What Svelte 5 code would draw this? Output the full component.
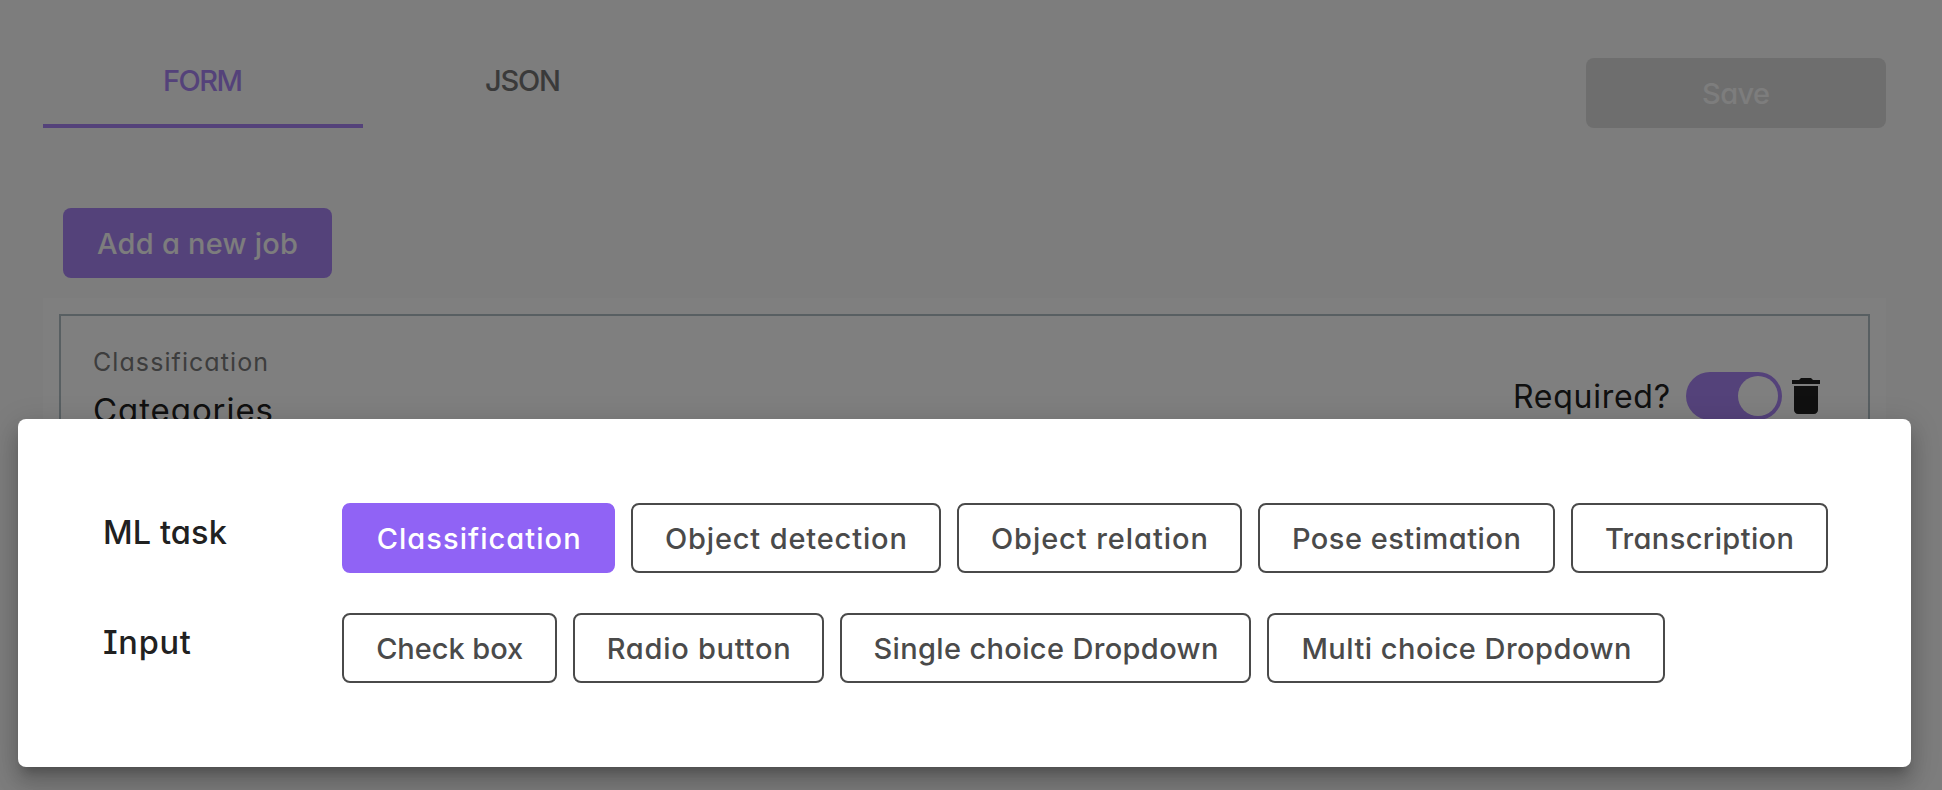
<script>
  const tasks = [
    { label: 'Classification', box: 272.5, text: 204, active: true },
    { label: 'Object detection', box: 310, text: 242 },
    { label: 'Object relation', box: 285, text: 217 },
    { label: 'Pose estimation', box: 297, text: 229 },
    { label: 'Transcription', box: 257, text: 189 },
  ];
  const inputs = [
    { label: 'Check box', box: 214.5, text: 147 },
    { label: 'Radio button', box: 251.5, text: 184 },
    { label: 'Single choice Dropdown', box: 411, text: 345 },
    { label: 'Multi choice Dropdown', box: 398, text: 330 },
  ];
  const rows = [
    { name: 'ML task', width: 124, items: tasks },
    { name: 'Input', width: 88, items: inputs },
  ];

  // Spreads the letters of a label over the given width.
  function track(node, width) {
    const count = node.textContent.length - 1;
    const gap = (width - node.getBoundingClientRect().width) / count;
    node.style.letterSpacing = `${gap}px`;
    node.style.marginRight = `${-gap}px`;
  }
</script>

<div class="screen">
  <div class="page">
    <header>
      <nav>
        <div class="tab selected"><span use:track={80}>FORM</span></div>
        <div class="tab"><span use:track={76}>JSON</span></div>
      </nav>
      <button class="save"><span use:track={68}>Save</span></button>
    </header>
    <button class="add"><span use:track={201}>Add a new job</span></button>
    <section class="panel">
      <div class="card">
        <div class="titles">
          <div class="kind"><span use:track={175}>Classification</span></div>
          <div class="name"><span use:track={180}>Categories</span></div>
        </div>
        <div class="controls">
          <span class="required"><span use:track={157}>Required?</span></span>
          <div class="switch"><div class="knob"></div></div>
          <svg viewBox="0 0 24 24" width="48" height="48"><path fill="#212121" d="M6 19c0 1.1.9 2 2 2h8c1.1 0 2-.9 2-2V7H6v12zM19 4h-3.5l-1-1h-5l-1 1H5v2h14V4z" /></svg>
        </div>
      </div>
    </section>
  </div>
  <div class="backdrop"></div>
  <div class="dialog">
    {#each rows as row}
      <div class="row">
        <div class="label"><span use:track={row.width}>{row.name}</span></div>
        <div class="options">
          {#each row.items as item}
            <button class="option" class:active={item.active} style="width: {item.box}px">
              <span use:track={item.text}>{item.label}</span>
            </button>
          {/each}
        </div>
      </div>
    {/each}
  </div>
</div>

<style>
  :global(body) { margin: 0; }
  .screen {
    position: relative;
    width: 1942px;
    height: 790px;
    overflow: hidden;
    background: #fafafa;
    color: #212121;
    font-family: Inter, "Liberation Sans", sans-serif;
    font-feature-settings: "cv11", "cv08";
  }
  .screen * { box-sizing: border-box; }
  span { display: inline-block; white-space: pre; }
  button {
    display: flex;
    align-items: center;
    justify-content: center;
    height: 70px;
    padding: 0;
    border: 0;
    border-radius: 8px;
    font: inherit;
    font-size: 29px;
    font-weight: 540;
    font-feature-settings: inherit;
  }
  .page { padding: 32px 56px 0 43px; }
  header { display: flex; justify-content: space-between; align-items: flex-end; }
  nav { display: flex; }
  .tab {
    display: flex;
    align-items: center;
    justify-content: center;
    width: 320px;
    height: 96px;
    padding-top: 4px;
    border-bottom: 4px solid transparent;
    color: #747474;
    font-size: 29px;
    font-weight: 540;
  }
  .selected { border-color: #a984f5; color: #a984f5; }
  .save { width: 300px; background: #dcdcdc; color: #fafafa; }
  .add { width: 269px; margin: 80px 0 20px 20px; background: #a984f5; color: #fafafa; }
  .panel { height: 450px; padding: 16px; background: #fff; }
  .card {
    display: flex;
    justify-content: space-between;
    height: 418px;
    border: 2px solid #b0bec5;
    padding: 32px 38px 0 32px;
    font-weight: 400;
  }
  .kind { color: #7a7a7a; font-size: 25px; line-height: 29px; }
  .name { margin-top: 13px; font-size: 33px; line-height: 40px; }
  .controls { display: flex; align-items: center; height: 48px; margin-top: 24px; }
  .required { margin: 0 16px 0 0; font-size: 32px; }
  .switch { width: 96px; height: 48px; padding: 4px; border-radius: 24px; background: #a984f5; }
  .knob { width: 40px; height: 40px; margin-left: auto; border-radius: 50%; background: #fff; }
  .controls svg { display: block; }
  .backdrop { position: absolute; inset: 0; background: rgba(0, 0, 0, 0.5); }
  .dialog {
    position: absolute;
    left: 18.4px;
    top: 419px;
    width: 1893px;
    height: 348px;
    display: flex;
    flex-direction: column;
    gap: 40px;
    padding: 84px 0 0 84px;
    border-radius: 8px;
    background: #fff;
    box-shadow: 0 10px 10px -6px rgba(0, 0, 0, 0.2), 0 16px 20px 2px rgba(0, 0, 0, 0.14), 0 6px 28px 4px rgba(0, 0, 0, 0.12);
  }
  .row { display: flex; }
  .label { width: 240px; padding: 10px 0 0 0.5px; font-size: 32.5px; font-weight: 540; line-height: 40px; }
  .options { display: flex; gap: 16px; }
  .option { border: 2px solid #4a4a4a; background: #fff; color: #4a4a4a; }
  .active { border-color: #9063f5; background: #9063f5; color: #fff; }
</style>
